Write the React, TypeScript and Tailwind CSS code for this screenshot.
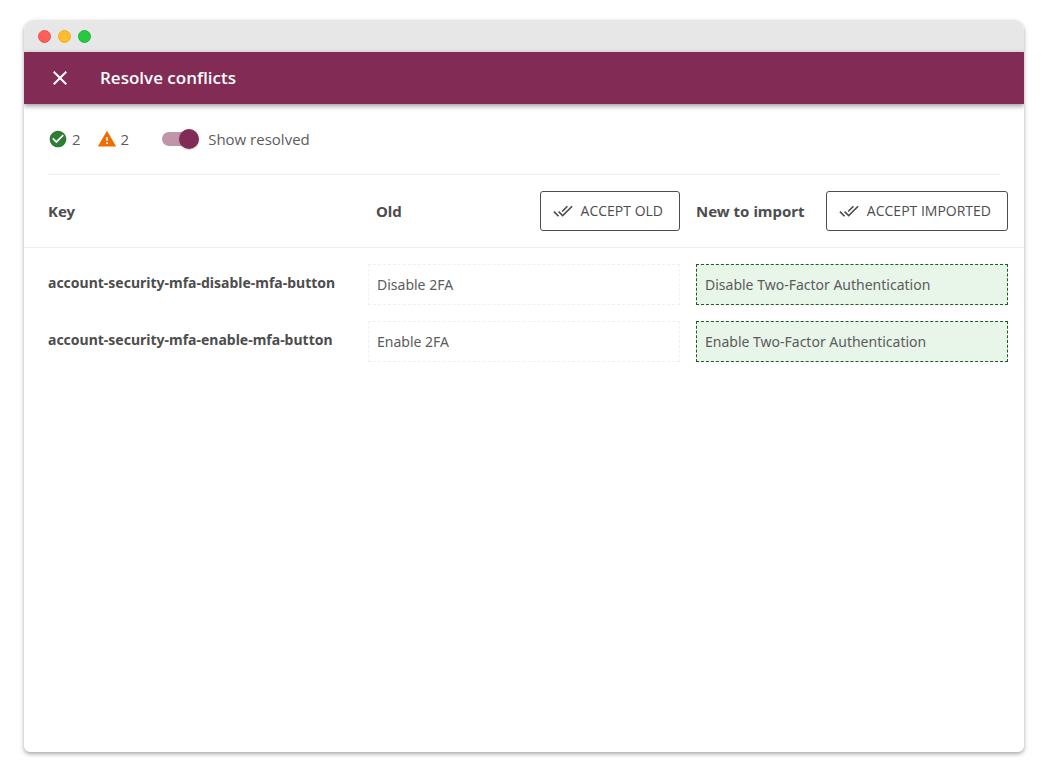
import { useState } from 'react';
import { MdCheckCircle, MdClose, MdDoneAll, MdWarning } from 'react-icons/md';

type Side = 'old' | 'new';

interface Conflict {
  key: string;
  old: string;
  new: string;
}

const conflicts: Conflict[] = [
  {
    key: 'account-security-mfa-disable-mfa-button',
    old: 'Disable 2FA',
    new: 'Disable Two-Factor Authentication',
  },
  {
    key: 'account-security-mfa-enable-mfa-button',
    old: 'Enable 2FA',
    new: 'Enable Two-Factor Authentication',
  },
];

function AcceptButton({ label, onClick }: { label: string; onClick: () => void }) {
  return (
    <button
      type="button"
      onClick={onClick}
      className="flex h-10 items-center gap-2 rounded-[3px] border border-[#4d4d4d] pr-4 pl-3 font-['Open_Sans',sans-serif] text-sm font-medium whitespace-nowrap uppercase"
    >
      <MdDoneAll className="size-5" aria-hidden="true" />
      {label}
    </button>
  );
}

function Translation({ text, chosen, onClick }: { text: string; chosen: boolean; onClick: () => void }) {
  return (
    <button
      type="button"
      aria-pressed={chosen}
      onClick={onClick}
      className={
        'flex h-[41px] w-full items-center border border-dashed px-2 text-left text-sm text-[#5c5c5c] ' +
        (chosen ? 'border-[#1b5e20] bg-[#e8f5e9]' : 'border-[#f0f0f0] bg-white')
      }
    >
      {text}
    </button>
  );
}

export default function App() {
  const [showResolved, setShowResolved] = useState(true);
  const [choices, setChoices] = useState<Side[]>(conflicts.map(() => 'new'));

  const acceptAll = (side: Side) => setChoices(conflicts.map(() => side));
  const choose = (index: number, side: Side) =>
    setChoices((current) => current.map((value, i) => (i === index ? side : value)));

  return (
    <div className="flex min-h-screen flex-col bg-white px-6 pt-5 pb-7 font-['Open_Sans','Noto_Sans',sans-serif] text-[#4d4d4d]">
      <div className="flex grow flex-col overflow-hidden rounded-t-[10px] rounded-b-md bg-white shadow-[0_2px_4px_rgba(0,0,0,0.35)]">
        <div className="flex h-8 items-center gap-[7px] bg-[#e7e7e7] px-3.5 pt-px">
          <span className="size-[13px] rounded-full border border-[#e9524a] bg-[#ff5f57]" />
          <span className="size-[13px] rounded-full border border-[#f1ae1b] bg-[#febc2e]" />
          <span className="size-[13px] rounded-full border border-[#1db43a] bg-[#28c840]" />
        </div>

        <header className="relative flex h-13 items-center gap-7 bg-[#822b55] px-6 text-white shadow-[0_2px_5px_rgba(0,0,0,0.4)]">
          <button type="button" aria-label="Close" className="flex">
            <MdClose className="size-6" />
          </button>
          <h1 className="text-[17px] leading-6 font-semibold">Resolve conflicts</h1>
        </header>

        <main>
          <div className="mx-6 flex h-[71px] items-center border-b border-[#ededed] text-[15px] text-[#5c5c5c]">
            <span className="flex items-center gap-1">
              <MdCheckCircle className="size-5 text-[#2e7d32]" aria-label="Resolved" />2
            </span>
            <span className="ml-4 flex items-center gap-1">
              <MdWarning className="size-5 text-[#ef6c00]" aria-label="Conflicts" />2
            </span>
            <label className="ml-[33px] flex items-center gap-3">
              <input
                type="checkbox"
                role="switch"
                checked={showResolved}
                onChange={(event) => setShowResolved(event.target.checked)}
                className="flex h-3.5 w-[34px] appearance-none items-center rounded-full bg-[#bdbdbd] before:size-5 before:shrink-0 before:rounded-full before:bg-white before:shadow-[0_1px_2px_rgba(0,0,0,0.2)] before:content-[''] checked:bg-[#c095aa] checked:before:translate-x-[17px] checked:before:bg-[#822b55]"
              />
              Show resolved
            </label>
          </div>

          <table className="w-full table-fixed text-left font-['Noto_Sans',sans-serif]">
            <thead className="border-b border-[#ededed]">
              <tr>
                <th className="pl-6 text-[15px] font-bold">Key</th>
                <th className="w-[32.8%] px-2 py-4">
                  <div className="flex items-center justify-between pl-2">
                    <span className="text-[15px] font-bold">Old</span>
                    <AcceptButton label="Accept old" onClick={() => acceptAll('old')} />
                  </div>
                </th>
                <th className="py-4 pr-4 pl-2">
                  <div className="flex items-center justify-between">
                    <span className="text-[15px] font-bold">New to import</span>
                    <AcceptButton label="Accept imported" onClick={() => acceptAll('new')} />
                  </div>
                </th>
              </tr>
            </thead>
            <tbody className="before:block before:h-2 before:content-['']">
              {showResolved &&
                conflicts.map((conflict, index) => (
                  <tr key={conflict.key}>
                    <th scope="row" className="pt-4 pl-6 align-top text-sm leading-[22px] font-bold">
                      {conflict.key}
                    </th>
                    <td className="p-2">
                      <Translation
                        text={conflict.old}
                        chosen={choices[index] === 'old'}
                        onClick={() => choose(index, 'old')}
                      />
                    </td>
                    <td className="py-2 pr-4 pl-2">
                      <Translation
                        text={conflict.new}
                        chosen={choices[index] === 'new'}
                        onClick={() => choose(index, 'new')}
                      />
                    </td>
                  </tr>
                ))}
            </tbody>
          </table>
        </main>
      </div>
    </div>
  );
}
